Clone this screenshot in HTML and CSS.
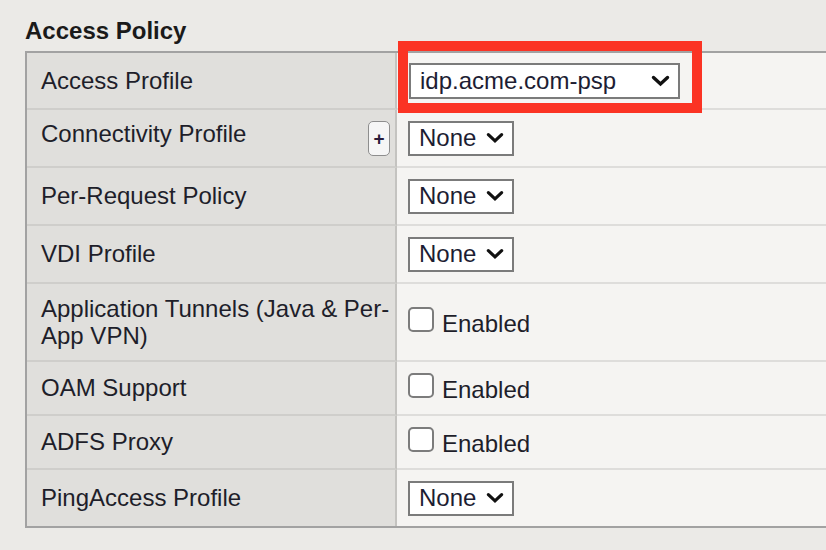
FILE: index.html
```html
<!DOCTYPE html>
<html lang="en">
<head>
<meta charset="utf-8">
<title>Access Policy</title>
<link rel="stylesheet" href="styles.css">
</head>
<body>
<div class="page">
  <h2 class="section-title">Access Policy</h2>
  <div class="props">
    <div class="label">Access Profile</div>
    <div class="value">
      <div class="select wide"><span>idp.acme.com-psp</span><svg class="chev" viewBox="0 0 19 12" width="19" height="12"><polyline points="2.5,2.5 9.5,9 16.5,2.5"/></svg></div>
    </div>

    <div class="label with-btn"><span class="label-text">Connectivity Profile</span><button class="add" type="button">+</button></div>
    <div class="value">
      <div class="select small"><span>None</span><svg class="chev" viewBox="0 0 19 12" width="18" height="12"><polyline points="2.5,2.5 9.5,9 16.5,2.5"/></svg></div>
    </div>

    <div class="label">Per-Request Policy</div>
    <div class="value">
      <div class="select small"><span>None</span><svg class="chev" viewBox="0 0 19 12" width="18" height="12"><polyline points="2.5,2.5 9.5,9 16.5,2.5"/></svg></div>
    </div>

    <div class="label">VDI Profile</div>
    <div class="value">
      <div class="select small"><span>None</span><svg class="chev" viewBox="0 0 19 12" width="18" height="12"><polyline points="2.5,2.5 9.5,9 16.5,2.5"/></svg></div>
    </div>

    <div class="label">Application Tunnels (Java &amp; Per-App VPN)</div>
    <div class="value">
      <label class="opt"><span class="check"></span>Enabled</label>
    </div>

    <div class="label">OAM Support</div>
    <div class="value">
      <label class="opt"><span class="check"></span>Enabled</label>
    </div>

    <div class="label">ADFS Proxy</div>
    <div class="value">
      <label class="opt"><span class="check"></span>Enabled</label>
    </div>

    <div class="label last">PingAccess Profile</div>
    <div class="value last">
      <div class="select small"><span>None</span><svg class="chev" viewBox="0 0 19 12" width="18" height="12"><polyline points="2.5,2.5 9.5,9 16.5,2.5"/></svg></div>
    </div>
  </div>
  <div class="highlight"></div>
</div>
</body>
</html>
```

FILE: styles.css
```css
html, body {
  margin: 0;
  padding: 0;
}

body {
  background: #ebeae7;
  font-family: "Liberation Sans", Arial, sans-serif;
  color: #1e1e2a;
  overflow: hidden;
}

.page {
  position: relative;
  padding: 16px 0 0 25px;
}

.section-title {
  margin: 0;
  font-size: 24px;
  line-height: 29px;
  font-weight: bold;
  color: #1a1a1a;
}

.props {
  margin-top: 6px;
  display: grid;
  grid-template-columns: 370px 1fr;
  grid-template-rows: 57px 58px 58px 58px 78px 54px 54px 56px;
  border: 2px solid #a2a2a2;
  border-right: none;
  font-size: 24px;
  line-height: 27.5px;
}

.label {
  box-sizing: border-box;
  display: flex;
  align-items: center;
  padding: 0 2px 0 14px;
  background: #e0dfdc;
  border-right: 2px solid #c4c3c0;
  border-bottom: 2px solid #cfcecb;
}

.value {
  box-sizing: border-box;
  display: flex;
  align-items: center;
  padding-left: 11px;
  background: #f5f4f2;
  border-bottom: 2px solid #dedddb;
}

.label.last,
.value.last {
  border-bottom: none;
}

.with-btn {
  justify-content: space-between;
}

.label-text {
  align-self: flex-start;
  padding-top: 10px;
}

.add {
  box-sizing: border-box;
  width: 22px;
  height: 35px;
  margin-top: 1px;
  margin-right: 3px;
  padding: 0;
  border: 1.5px solid #8e8e8e;
  border-radius: 5px;
  background: #f6f6f6;
  font-family: "Liberation Sans", Arial, sans-serif;
  font-size: 19px;
  font-weight: bold;
  line-height: 1;
  color: #2a1c3a;
  display: flex;
  align-items: center;
  justify-content: center;
}

.select {
  box-sizing: border-box;
  display: flex;
  align-items: center;
  justify-content: space-between;
  height: 35px;
  border: 2px solid #7b7b7b;
  background: #ffffff;
  padding: 0 8px 0 9px;
  color: #1d1d33;
}

.select.wide {
  width: 271px;
  height: 36px;
  margin-left: 1px;
}

.select.small {
  width: 106px;
}

.chev {
  display: block;
  flex: none;
}

.chev polyline {
  fill: none;
  stroke: #111111;
  stroke-width: 3.4;
  stroke-linecap: round;
  stroke-linejoin: miter;
}

.opt {
  display: block;
  color: #1e1e2a;
}

.check {
  display: inline-block;
  box-sizing: border-box;
  width: 26px;
  height: 25px;
  margin-right: 8px;
  border: 2px solid #7c7c7c;
  border-radius: 5px;
  background: #ffffff;
  vertical-align: baseline;
}

.highlight {
  position: absolute;
  left: 398px;
  top: 41px;
  width: 304px;
  height: 72px;
  box-sizing: border-box;
  border: 10px solid #fb3324;
}
```
